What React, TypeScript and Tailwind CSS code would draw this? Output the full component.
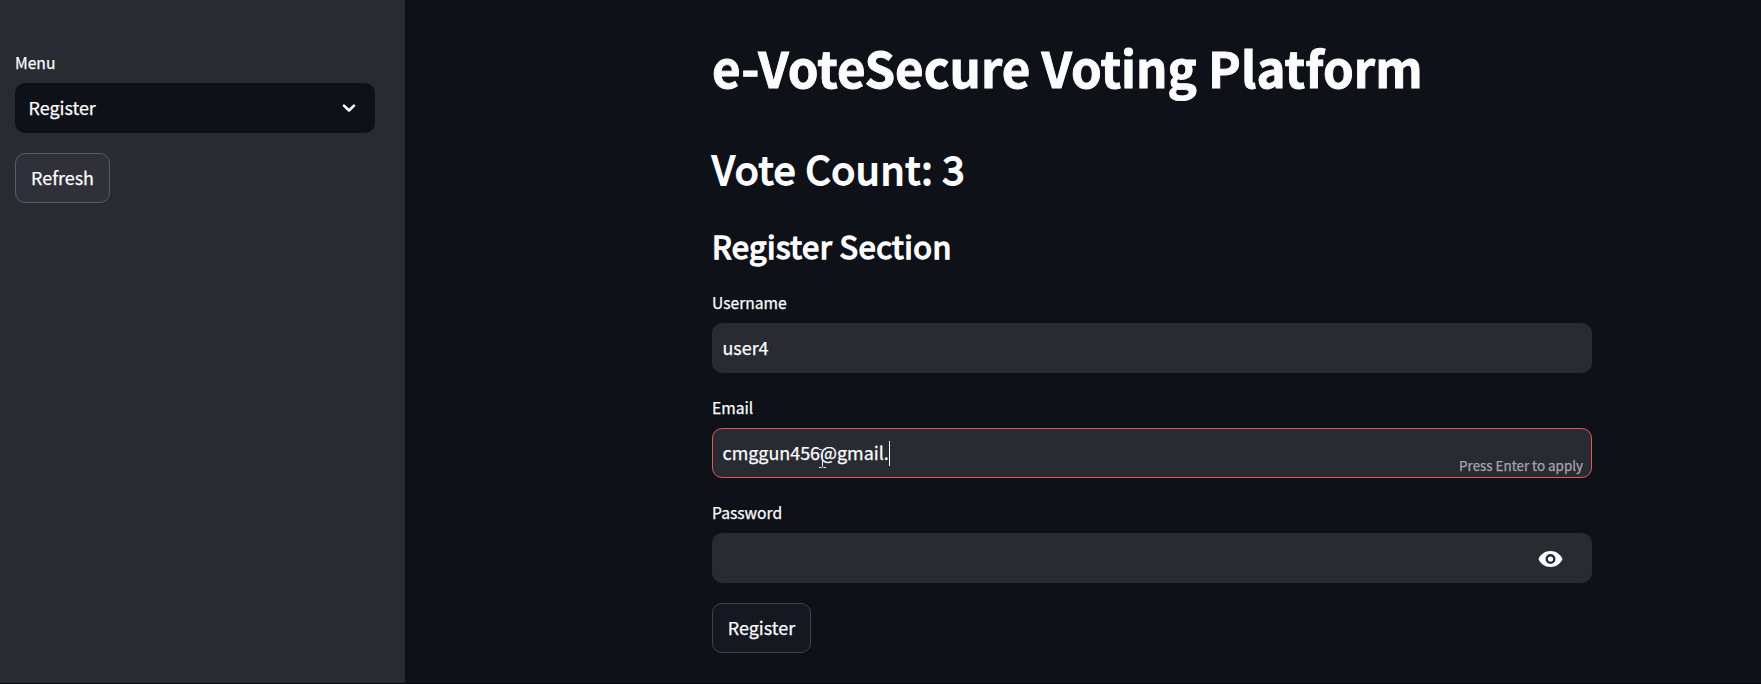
import type { ReactNode } from "react";

function Field({ label, focused = false, children }: { label: string; focused?: boolean; children?: ReactNode }) {
  return (
    <div>
      <div className="mb-[5px] h-[30px] text-[15.65px] leading-[30px]">{label}</div>
      <div
        className={
          "relative flex h-[50px] items-center rounded-[10px] border bg-[#292b33] pl-[9.500px] text-[17.92px] " +
          (focused ? "border-[#e5535a]" : "border-[#292b33]")
        }
      >
        {children}
      </div>
    </div>
  );
}

function EyeIcon() {
  return (
    <svg width="25" height="16" viewBox="0 0 24 16" className="mt-px mr-[28px] ml-auto">
      <path
        fill="#fff"
        fillRule="evenodd"
        d="M12 0C6.500 0 1.900 3.300 0 8c1.900 4.700 6.500 8 12 8s10.100-3.300 12-8C22.100 3.300 17.500 0 12 0Zm0 13a5 5 0 1 1 0-10 5 5 0 0 1 0 10Zm0-2.400a2.600 2.600 0 1 0 0-5.200 2.600 2.600 0 0 0 0 5.200Z"
      />
    </svg>
  );
}

export default function App() {
  return (
    <div className="flex h-[684px] w-[1761px] overflow-hidden border-b border-[#08080c] bg-[#0e1118] font-['Noto_Sans_CJK_SC','Noto_Sans',sans-serif] text-[#fcfcfd] [-webkit-text-stroke:0.25px]">
      <aside className="w-[405px] shrink-0 bg-[#292b33] pt-12 pr-[30px] pl-[15px]">
        <div className="mb-[5px] h-[30px] text-[15.65px] leading-[30px]">Menu</div>
        <div className="flex h-[50px] items-center justify-between rounded-[10px] bg-[#0e1118] pr-[19px] pl-[13.500px] text-[17.92px]">
          <span className="pb-[2px]">Register</span>
          <svg width="14" height="10" viewBox="0 0 14 10" fill="none" stroke="#fff" strokeWidth="2.6" strokeLinecap="round" strokeLinejoin="round">
            <path d="M2 2.600 7 7.500l5-4.900" />
          </svg>
        </div>
        <button className="mt-5 flex h-[50px] w-[95px] items-center justify-center rounded-[10px] border border-[#5b5c65] bg-[#2f3039] pb-[2px] text-[17.92px]">
          Refresh
        </button>
      </aside>
      <main className="pt-[34px] pl-[307px]">
        <div className="w-[880px]">
          <h1 className="h-[66px] text-[49.200px] leading-[66px] font-bold whitespace-nowrap [-webkit-text-stroke:0.9px]">e-VoteSecure Voting Platform</h1>
          <h2 className="mt-[41px] h-[54px] text-[39.600px] leading-[54px] font-normal tracking-[0.600px] whitespace-nowrap [-webkit-text-stroke:1.8px]">Vote Count: 3</h2>
          <h3 className="mt-[30px] h-[42px] text-[30.900px] leading-[42px] font-normal tracking-[0.520px] whitespace-nowrap [-webkit-text-stroke:1.5px]">Register Section</h3>
          <div className="mt-[21px] flex flex-col gap-5">
            <Field label="Username">
              <span className="pb-[2px]">user4</span>
            </Field>
            <Field label="Email" focused>
              <span className="pb-[2px]">cmggun456@gmail.</span>
              <span className="h-[25px] w-px bg-white" />
              <svg width="9" height="19" viewBox="0 0 9 19" fill="none" stroke="#e8e8ea" strokeWidth="1" className="absolute top-[20px] left-[105px]">
                <path d="M1 .5h2.500l1 1 1-1H8M4.500 1.500v16M1 18.500h2.500l1-1 1 1H8" />
              </svg>
              <span className="absolute right-[8px] bottom-px text-[13.400px] leading-[22px] text-[#a5a6ab]">Press Enter to apply</span>
            </Field>
            <Field label="Password">
              <EyeIcon />
            </Field>
          </div>
          <button className="mt-5 flex h-[50px] w-[99px] items-center justify-center rounded-[10px] border border-[#42444b] bg-[#151820] pb-[2px] text-[17.92px]">
            Register
          </button>
        </div>
      </main>
    </div>
  );
}
